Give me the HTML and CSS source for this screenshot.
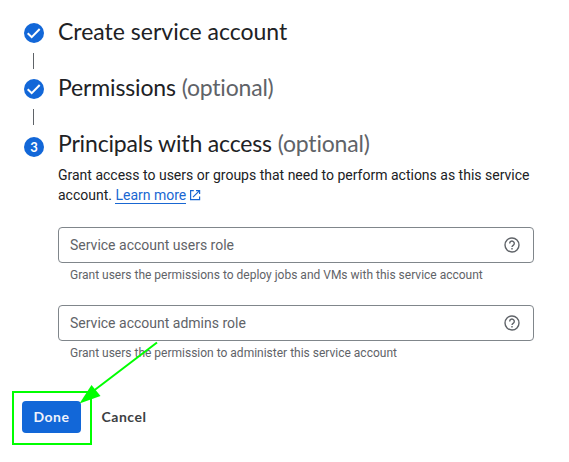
FILE: index.html
```html
<!DOCTYPE html>
<html lang="en">
<head>
<meta charset="utf-8">
<title>Create service account</title>
<link rel="stylesheet" href="styles.css">
</head>
<body>
<main class="page">
  <section class="step">
    <div class="rail">
      <svg class="badge" viewBox="0 0 20 20"><circle cx="10" cy="10" r="10"/><path d="M3.700 10.200l4 4 8-8.200"/></svg>
      <span class="connector"></span>
    </div>
    <h2 class="title"><span class="t-create">Create service account</span></h2>
  </section>
  <section class="step">
    <div class="rail">
      <svg class="badge" viewBox="0 0 20 20"><circle cx="10" cy="10" r="10"/><path d="M3.700 10.200l4 4 8-8.200"/></svg>
      <span class="connector"></span>
    </div>
    <h2 class="title"><span class="t-permissions">Permissions</span> <span class="optional">(optional)</span></h2>
  </section>
  <section class="step current">
    <div class="rail"><span class="number">3</span></div>
    <div class="content">
      <h2 class="title"><span class="t-principals">Principals with access</span> <span class="optional">(optional)</span></h2>
      <p class="description">Grant access to users or groups that need to perform actions as this service<br>account. <a class="link" href="#">Learn more</a><svg class="external" viewBox="0 0 12 12"><path d="M4.800 1.600H1.600v9h9V7.400M7 1.600h3.600V5M10.300 1.900L4 8.200"/></svg></p>
      <div class="field">
        <div class="input"><span>Service account users role</span>
          <svg class="help" viewBox="0 0 16 16"><circle cx="8" cy="8" r="7"/><path d="M5.700 6.400a2.300 2.300 0 1 1 3.700 1.800Q8 9.100 8 10.100"/><path d="M8 11v1.500"/></svg></div>
        <p class="hint">Grant users the permissions to deploy jobs and VMs with this service account</p>
      </div>
      <div class="field">
        <div class="input"><span>Service account admins role</span>
          <svg class="help" viewBox="0 0 16 16"><circle cx="8" cy="8" r="7"/><path d="M5.700 6.400a2.300 2.300 0 1 1 3.700 1.800Q8 9.100 8 10.100"/><path d="M8 11v1.500"/></svg></div>
        <p class="hint">Grant users the permission to administer this service account</p>
      </div>
    </div>
  </section>
  <div class="actions">
    <button class="button done"><span>Done</span></button>
    <button class="button cancel"><span>Cancel</span></button>
  </div>
  <svg class="annotation" viewBox="0 0 569 462"><rect x="13" y="392" width="78" height="52"/><path class="shaft" d="M157 342.500L92 392"/><path class="head" d="M79.500 403.500L91.500 385L100.500 396Z"/></svg>
</main>
</body>
</html>
```

FILE: styles.css
```css
* { box-sizing: border-box; }
body { margin: 0; background: #fff; color: #202124; font-family: Roboto, sans-serif; }
.page { position: relative; width: 569px; height: 462px; padding: 17px 35px 0 24px; overflow: hidden; }
.step { display: flex; gap: 14px; height: 56px; }
.current { height: auto; }
.rail { width: 20px; flex: none; padding-top: 6px; display: flex; flex-direction: column; align-items: center; }
.badge { width: 20px; height: 20px; display: block; flex: none; }
.badge circle { fill: #1267d8; }
.badge path { fill: none; stroke: #fff; stroke-width: 2; }
.connector { width: 1px; height: 16px; margin: 10px 1px 0 0; background: #5f6368; }
.number { width: 20px; height: 20px; margin-top: 2px; border-radius: 50%; background: #1267d8; color: #fff; font: 700 13px/20px Lato, sans-serif; text-align: center; }
.title { margin: 0; font: 400 23px/28px Lato, sans-serif; white-space: nowrap; }
.t-permissions { letter-spacing: -0.15px; }
.t-principals { letter-spacing: -0.17px; }
.optional { color: #5f6368; letter-spacing: -0.2px; }
.content { width: 476px; flex: none; }
.description { margin: 8px 0 22px; font-size: 14px; line-height: 20px; white-space: nowrap; }
.link { color: #1967d2; text-decoration: none; border-bottom: 1px solid #1967d2; }
.external { width: 12px; height: 12px; margin-left: 3px; vertical-align: -1px; }
.external path { fill: none; stroke: #1967d2; stroke-width: 1.2; }
.field { height: 78px; }
.input { height: 36px; border: 1px solid #80868b; border-radius: 4px; padding: 0 13px 0 11px; display: flex; align-items: center; justify-content: space-between; font-size: 14px; color: #5f6368; }
.help { width: 16px; height: 16px; }
.help circle, .help path { fill: none; stroke: #5f6368; stroke-width: 1.4; }
.hint { margin: 4px 0 0 12px; font-size: 12px; line-height: 16px; color: #5f6368; }
.actions { display: flex; margin: 18px 0 0 -2px; }
.button { height: 32px; border: 0; border-radius: 4px; padding: 0; background: none; font: 700 14px/32px Lato, sans-serif; letter-spacing: 0.5px; color: #3c4043; }
.done { width: 59px; background: #1267d8; color: #f0f2fc; }
.cancel { width: 86px; }
.annotation { position: absolute; left: 0; top: 0; width: 569px; height: 462px; }
.annotation rect, .shaft { fill: none; stroke: #0f0; stroke-width: 2; }
.head { fill: #0f0; }
```
